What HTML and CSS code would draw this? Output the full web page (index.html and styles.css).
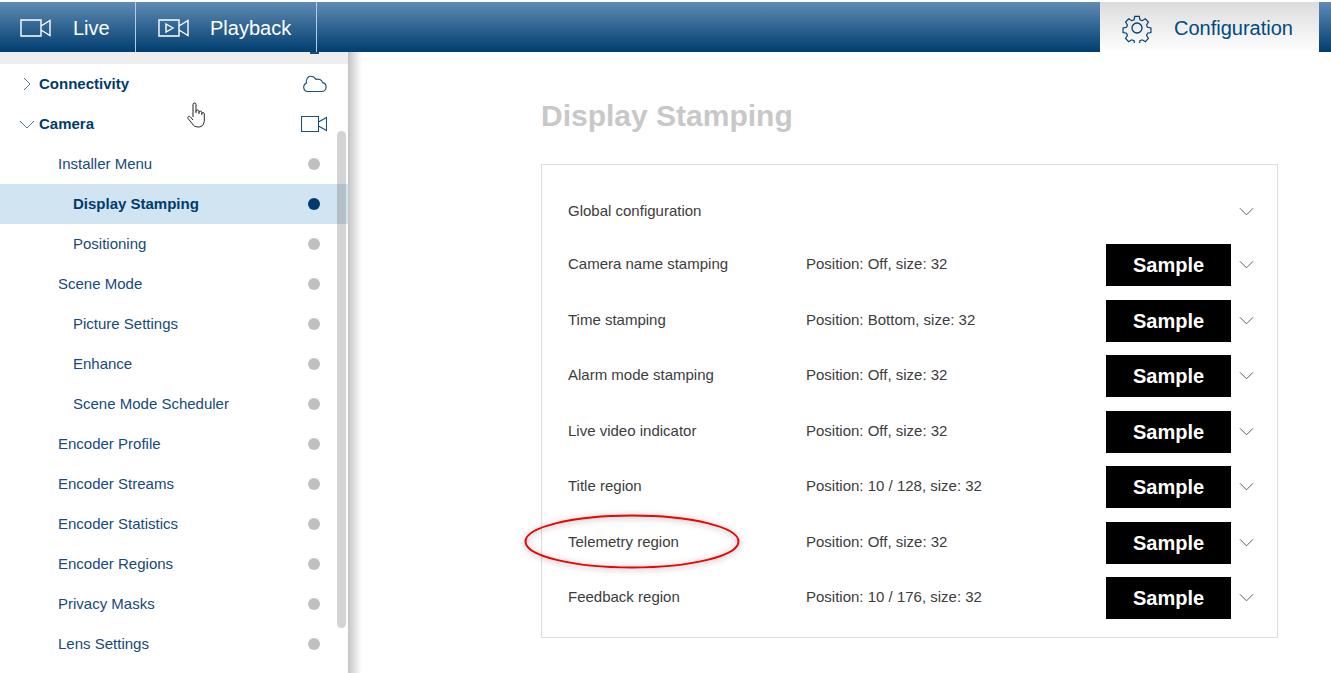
FILE: index.html
```html
<!DOCTYPE html>
<html lang="en">
<head>
<meta charset="utf-8">
<title>Display Stamping</title>
<link rel="stylesheet" href="styles.css">
</head>
<body>
<header class="topbar">
  <a class="tab tab-live">
    <svg class="ico-cam" viewBox="0 0 32 20"><path d="M1 2h20v16H1z M21 8l9-5.500v15l-9-5.500" /></svg>
    <span>Live</span>
  </a>
  <a class="tab tab-play">
    <svg class="ico-cam" viewBox="0 0 32 20"><path d="M1 2h20v16H1z M21 8l9-5.500v15l-9-5.500 M8 6l7 4-7 4z" /></svg>
    <span>Playback</span>
  </a>
  <a class="tab-config">
    <svg class="ico-gear" viewBox="0 0 30 30"><circle cx="15" cy="15" r="5"/><path d="M12.500 2h5l.8 3.800 2.600 1.100 3.300-2.100 3.500 3.500-2.100 3.300 1.100 2.600 3.800.8v5l-3.800.8-1.100 2.600 2.100 3.300-3.500 3.500-3.300-2.100-2.600 1.100-.8 3.800h-5l-.8-3.800-2.600-1.100-3.300 2.100-3.500-3.500 2.100-3.300-1.100-2.600-3.800-.8v-5l3.800-.8 1.100-2.600-2.100-3.300 3.500-3.500 3.300 2.100 2.600-1.100z" transform="translate(1.500 1.500) scale(.9)"/></svg>
    <span>Configuration</span>
  </a>
</header>
<div class="layout">
  <aside class="sidebar">
    <div class="strip"><i class="peek"></i></div>
    <nav class="nav">
      <div class="row head">
        <svg class="caret" viewBox="0 0 12 12"><path d="M3 0l6 6-6 6"/></svg>
        <span class="label">Connectivity</span>
        <svg class="side-ico" viewBox="0 0 26 18"><path d="M6 16.500h14.500a4.500 4.500 0 0 0 1-8.900 5 5 0 0 0-6.500-3.200A6.500 6.500 0 0 0 8 1.500 6 6 0 0 0 5.500 8 4.500 4.500 0 0 0 6 16.500z"/></svg>
      </div>
      <div class="row head">
        <svg class="caret" viewBox="0 0 12 12"><path d="M-1 3l7 7 7-7"/></svg>
        <span class="label">Camera</span>
        <svg class="side-ico" viewBox="0 0 26 18"><path d="M.5 1.500h17v15H.5z M17.500 7l8-4.500v13l-8-4.500"/></svg>
      </div>
      <div class="row l1"><span class="label">Installer Menu</span><i class="dot"></i></div>
      <div class="row l2 active"><span class="label">Display Stamping</span><i class="dot"></i></div>
      <div class="row l2"><span class="label">Positioning</span><i class="dot"></i></div>
      <div class="row l1"><span class="label">Scene Mode</span><i class="dot"></i></div>
      <div class="row l2"><span class="label">Picture Settings</span><i class="dot"></i></div>
      <div class="row l2"><span class="label">Enhance</span><i class="dot"></i></div>
      <div class="row l2"><span class="label">Scene Mode Scheduler</span><i class="dot"></i></div>
      <div class="row l1"><span class="label">Encoder Profile</span><i class="dot"></i></div>
      <div class="row l1"><span class="label">Encoder Streams</span><i class="dot"></i></div>
      <div class="row l1"><span class="label">Encoder Statistics</span><i class="dot"></i></div>
      <div class="row l1"><span class="label">Encoder Regions</span><i class="dot"></i></div>
      <div class="row l1"><span class="label">Privacy Masks</span><i class="dot"></i></div>
      <div class="row l1"><span class="label">Lens Settings</span><i class="dot"></i></div>
    </nav>
    <div class="scrollbar"></div>
    <svg class="hand" viewBox="0 0 18 26"><path d="M6 15V2.500a1.500 1.500 0 0 1 3 0V11m0-1.500a1.500 1.500 0 0 1 3 0V12m0-1.500a1.400 1.400 0 0 1 2.800 0V13m0-1.500a1.300 1.300 0 0 1 2.500 0V18c0 4-2 7-5.800 7-3.400 0-5-1.200-6.500-3.700L1 16.500c-.9-1.800 1.300-3 2.400-1.500L6 18"/></svg>
  </aside>
  <main class="content">
    <h1 class="title">Display Stamping</h1>
    <section class="panel">
      <div class="stamp global">
        <span class="name">Global configuration</span>
        <svg class="chev" viewBox="0 0 16 10"><path d="M1 1l7 7 7-7"/></svg>
      </div>
      <div class="stamp"><span class="name">Camera name stamping</span><span class="val">Position: Off, size: 32</span><b class="sample">Sample</b><svg class="chev" viewBox="0 0 16 10"><path d="M1 1l7 7 7-7"/></svg></div>
      <div class="stamp"><span class="name">Time stamping</span><span class="val">Position: Bottom, size: 32</span><b class="sample">Sample</b><svg class="chev" viewBox="0 0 16 10"><path d="M1 1l7 7 7-7"/></svg></div>
      <div class="stamp"><span class="name">Alarm mode stamping</span><span class="val">Position: Off, size: 32</span><b class="sample">Sample</b><svg class="chev" viewBox="0 0 16 10"><path d="M1 1l7 7 7-7"/></svg></div>
      <div class="stamp"><span class="name">Live video indicator</span><span class="val">Position: Off, size: 32</span><b class="sample">Sample</b><svg class="chev" viewBox="0 0 16 10"><path d="M1 1l7 7 7-7"/></svg></div>
      <div class="stamp"><span class="name">Title region</span><span class="val">Position: 10 / 128, size: 32</span><b class="sample">Sample</b><svg class="chev" viewBox="0 0 16 10"><path d="M1 1l7 7 7-7"/></svg></div>
      <div class="stamp"><span class="name">Telemetry region</span><span class="val">Position: Off, size: 32</span><b class="sample">Sample</b><svg class="chev" viewBox="0 0 16 10"><path d="M1 1l7 7 7-7"/></svg></div>
      <div class="stamp"><span class="name">Feedback region</span><span class="val">Position: 10 / 176, size: 32</span><b class="sample">Sample</b><svg class="chev" viewBox="0 0 16 10"><path d="M1 1l7 7 7-7"/></svg></div>
    </section>
    <svg class="ring" viewBox="0 0 224 62"><ellipse cx="112" cy="30.500" rx="106.500" ry="26"/></svg>
  </main>
</div>
</body>
</html>
```
FILE: styles.css
```css
* { box-sizing: border-box; }
html, body { margin: 0; height: 100%; overflow: hidden; }
body {
  width: 1331px;
  height: 673px;
  font-family: "Liberation Sans", Arial, sans-serif;
  background: #fff;
  padding-top: 2px;
}
.topbar {
  height: 50px;
  display: flex;
  align-items: stretch;
  background: linear-gradient(#5f8bb3, #003e70);
  color: #fff;
  font-size: 20px;
}
.tab {
  display: flex;
  align-items: center;
  padding-top: 2px;
  border-right: 1px solid #b6cde0;
}
.tab-live { width: 136px; padding-left: 20px; gap: 21px; }
.tab-play { width: 181px; padding-left: 22px; gap: 20px; }
.ico-cam { width: 32px; height: 20px; fill: none; stroke: #fff; stroke-width: 1.400; }
.tab-config {
  margin-left: auto;
  margin-right: 12px;
  width: 219px;
  display: flex;
  align-items: center;
  padding: 2px 0 0 22px;
  gap: 22px;
  color: #004a80;
  background: linear-gradient(#dcdcdc, #fff);
}
.ico-gear { width: 30px; height: 30px; fill: none; stroke: #003f72; stroke-width: 1.300; }
.layout { display: flex; height: 621px; }
.sidebar {
  position: relative;
  flex: none;
  width: 348px;
  overflow: hidden;
  background: #fff;
}
.layout::before {
  content: "";
  position: absolute;
  left: 348px;
  top: 52px;
  width: 14px;
  height: 621px;
  background: linear-gradient(90deg, #c4c4c4, #fff);
}
.strip { position: relative; height: 12px; background: #eeeeee; }
.peek {
  position: absolute;
  left: 310px;
  top: 0;
  width: 9px;
  height: 2px;
  background: #1b4f7d;
}
.nav { display: flex; flex-direction: column; }
.row {
  flex: none;
  height: 40px;
  display: flex;
  align-items: center;
  padding-right: 28px;
  color: #17497a;
  font-size: 15px;
}
.label { flex: 1; padding-bottom: 2px; }
.head { font-weight: 700; color: #003b6c; padding-left: 21px; padding-right: 21px; }
.caret { width: 12px; height: 12px; margin-right: 6px; fill: none; stroke: #56748f; stroke-width: 1; overflow: visible; }
.side-ico { width: 26px; height: 18px; fill: none; stroke: #1b4f7d; stroke-width: 1.100; }
.l1 { padding-left: 58px; }
.l2 { padding-left: 73px; }
.dot { width: 12px; height: 12px; border-radius: 50%; background: #c0c0c0; }
.active { background: #d1e4f1; font-weight: 700; color: #003b6c; }
.active .dot { background: #003b6c; }
.scrollbar {
  position: absolute;
  left: 337px;
  top: 79px;
  width: 9px;
  height: 497px;
  border-radius: 5px;
  background: rgba(110, 110, 110, .3);
}
.hand {
  position: absolute;
  left: 187px;
  top: 50px;
  width: 18px;
  height: 26px;
  fill: #fff;
  stroke: #222;
  stroke-width: 1;
}
.content {
  position: relative;
  flex: 1;
  padding: 46px 53px 0 193px;
}
.title {
  margin: 0 0 28px;
  height: 38px;
  font-size: 30px;
  line-height: 36px;
  font-weight: 700;
  color: #c8c8c8;
}
.panel {
  height: 474px;
  border: 1px solid #dcdcdc;
  padding: 18px 23px 0 26px;
}
.stamp {
  height: 55.500px;
  display: flex;
  align-items: center;
  font-size: 15px;
  color: #3c3c3c;
}
.global { height: 56px; margin-bottom: -1.500px; }
.name { width: 238px; flex: none; padding-bottom: 3px; }
.val { flex: 1; padding-bottom: 3px; }
.global .name { flex: 1; padding-bottom: 2px; }
.sample {
  width: 125px;
  height: 42px;
  display: flex;
  align-items: center;
  justify-content: center;
  padding-top: 1px;
  background: #000;
  color: #fff;
  font-size: 20px;
}
.chev { width: 15px; height: 10px; margin-left: 8px; fill: none; stroke: #555; stroke-width: 1; }
.global .chev { margin-top: 2px; }
.ring {
  position: absolute;
  left: 172px;
  top: 459px;
  width: 224px;
  height: 62px;
  overflow: visible;
  fill: none;
  stroke: #f00000;
  stroke-width: 2;
  filter: drop-shadow(0 1px 3px rgba(0, 0, 0, .4));
}
```
